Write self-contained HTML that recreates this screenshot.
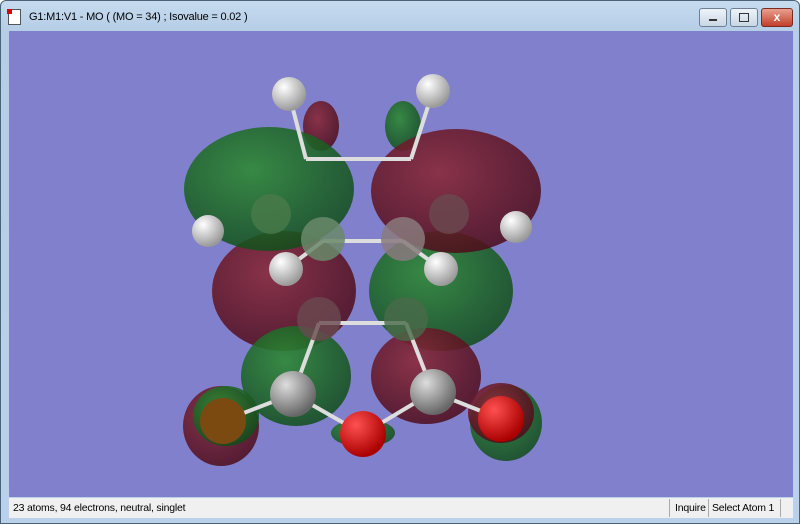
<!DOCTYPE html>
<html><head><style>
body{margin:0;width:800px;height:524px;overflow:hidden;font-family:"Liberation Sans",sans-serif;}
.win{position:absolute;left:0;top:0;width:798px;height:522px;border:1px solid #4a6378;border-radius:6px 6px 0 0;background:linear-gradient(#c6dbef,#b5cde6 30px,#b9d1ea);}
.title{position:absolute;left:28px;top:10px;font-size:11px;color:#000;letter-spacing:-0.2px}
.icon{position:absolute;left:7px;top:8px;width:11px;height:14px;background:#fff;border:1px solid #555;}
.icon:before{content:"";position:absolute;left:-2px;top:-1px;width:5px;height:5px;background:#d00;}
.btn{position:absolute;top:7px;height:17px;border:1px solid #6d7f94;border-radius:3px;background:linear-gradient(#eef3f9,#c9d7e6);}
.canvas{position:absolute;left:8px;top:30px;width:784px;height:466px;background:#8080cc;}
.status{position:absolute;left:8px;top:497px;width:784px;height:20px;background:#f0f0f0;font-size:10.5px;color:#000;letter-spacing:-0.2px}
</style></head><body>
<div class="win">
<div class="icon"></div>
<div class="title">G1:M1:V1 - MO ( (MO = 34) ; Isovalue = 0.02 )</div>
<div class="btn" style="left:698px;width:26px"><div style="position:absolute;left:9px;top:10px;width:8px;height:2px;background:#333"></div></div>
<div class="btn" style="left:729px;width:26px"><div style="position:absolute;left:8px;top:4px;width:8px;height:7px;border:1px solid #333"></div></div>
<div class="btn" style="left:760px;width:30px;background:linear-gradient(#e8a090,#c0402a);border-color:#7a2a20;color:#fff;font-weight:bold;font-size:12px;text-align:center;line-height:17px">x</div>
<div class="canvas">
<svg width="784" height="466" viewBox="8 30 784 466">
<defs>
<radialGradient id="g" cx="40%" cy="35%" r="70%"><stop offset="0" stop-color="#2f8a36" stop-opacity=".9"/><stop offset="1" stop-color="#0f4a18" stop-opacity=".85"/></radialGradient>
<radialGradient id="r" cx="40%" cy="35%" r="70%"><stop offset="0" stop-color="#8a2a3a" stop-opacity=".9"/><stop offset="1" stop-color="#4a0a18" stop-opacity=".85"/></radialGradient>
<radialGradient id="w" cx="35%" cy="30%" r="70%"><stop offset="0" stop-color="#fff"/><stop offset="1" stop-color="#999"/></radialGradient>
<radialGradient id="c" cx="35%" cy="30%" r="70%"><stop offset="0" stop-color="#ddd"/><stop offset="1" stop-color="#666"/></radialGradient>
<radialGradient id="o" cx="35%" cy="30%" r="70%"><stop offset="0" stop-color="#ff5050"/><stop offset="1" stop-color="#a00"/></radialGradient>
</defs>
<ellipse cx="320" cy="125" rx="18" ry="25" fill="url(#r)"/>
<ellipse cx="402" cy="125" rx="18" ry="25" fill="url(#g)"/>
<ellipse cx="283" cy="290" rx="72" ry="60" fill="url(#r)"/>
<ellipse cx="440" cy="290" rx="72" ry="60" fill="url(#g)"/>
<ellipse cx="295" cy="375" rx="55" ry="50" fill="url(#g)"/>
<ellipse cx="425" cy="375" rx="55" ry="48" fill="url(#r)"/>
<ellipse cx="268" cy="188" rx="85" ry="62" fill="url(#g)"/>
<ellipse cx="455" cy="190" rx="85" ry="62" fill="url(#r)"/>
<ellipse cx="220" cy="425" rx="38" ry="40" fill="url(#r)"/>
<ellipse cx="225" cy="415" rx="33" ry="30" fill="url(#g)"/>
<ellipse cx="505" cy="422" rx="36" ry="38" fill="url(#g)"/>
<ellipse cx="500" cy="412" rx="33" ry="30" fill="url(#r)"/>
<ellipse cx="362" cy="432" rx="32" ry="14" fill="url(#g)"/>
<g stroke="#ddd" stroke-width="4">
<line x1="305" y1="158" x2="410" y2="158"/><line x1="322" y1="240" x2="402" y2="240"/><line x1="318" y1="322" x2="405" y2="322"/>
<line x1="292" y1="393" x2="318" y2="322"/><line x1="432" y1="391" x2="405" y2="322"/>
<line x1="292" y1="393" x2="362" y2="433"/><line x1="432" y1="391" x2="362" y2="433"/>
<line x1="292" y1="393" x2="222" y2="420"/><line x1="432" y1="391" x2="500" y2="418"/>
<line x1="322" y1="240" x2="285" y2="268"/><line x1="402" y1="240" x2="440" y2="268"/>
<line x1="288" y1="93" x2="305" y2="158"/><line x1="432" y1="90" x2="410" y2="158"/>
</g>
<circle cx="288" cy="93" r="17" fill="url(#w)"/><circle cx="432" cy="90" r="17" fill="url(#w)"/>
<circle cx="207" cy="230" r="16" fill="url(#w)"/><circle cx="515" cy="226" r="16" fill="url(#w)"/>
<circle cx="270" cy="213" r="20" fill="#4a7a4a" opacity=".8"/><circle cx="448" cy="213" r="20" fill="#6a4a50" opacity=".8"/>
<circle cx="322" cy="238" r="22" fill="#6a8a6a" opacity=".85"/><circle cx="402" cy="238" r="22" fill="#8a7a7e" opacity=".85"/>
<circle cx="318" cy="318" r="22" fill="#6a4a50" opacity=".8"/><circle cx="405" cy="318" r="22" fill="#4a6a4a" opacity=".8"/>
<circle cx="285" cy="268" r="17" fill="url(#w)"/><circle cx="440" cy="268" r="17" fill="url(#w)"/>
<circle cx="292" cy="393" r="23" fill="url(#c)"/><circle cx="432" cy="391" r="23" fill="url(#c)"/>
<circle cx="362" cy="433" r="23" fill="url(#o)"/>
<circle cx="222" cy="420" r="23" fill="#7a4a10"/><circle cx="500" cy="418" r="23" fill="url(#o)"/>
</svg>
</div>
<div class="status">
<span style="position:absolute;left:4px;top:4px">23 atoms, 94 electrons, neutral, singlet</span>
<span style="position:absolute;left:660px;top:1px;height:18px;border-left:1px solid #aaa"></span>
<span style="position:absolute;left:666px;top:4px">Inquire</span>
<span style="position:absolute;left:699px;top:1px;height:18px;border-left:1px solid #aaa"></span>
<span style="position:absolute;left:703px;top:4px">Select Atom 1</span>
<span style="position:absolute;left:771px;top:1px;height:18px;border-left:1px solid #aaa"></span>
</div>
</div>
</body></html>
